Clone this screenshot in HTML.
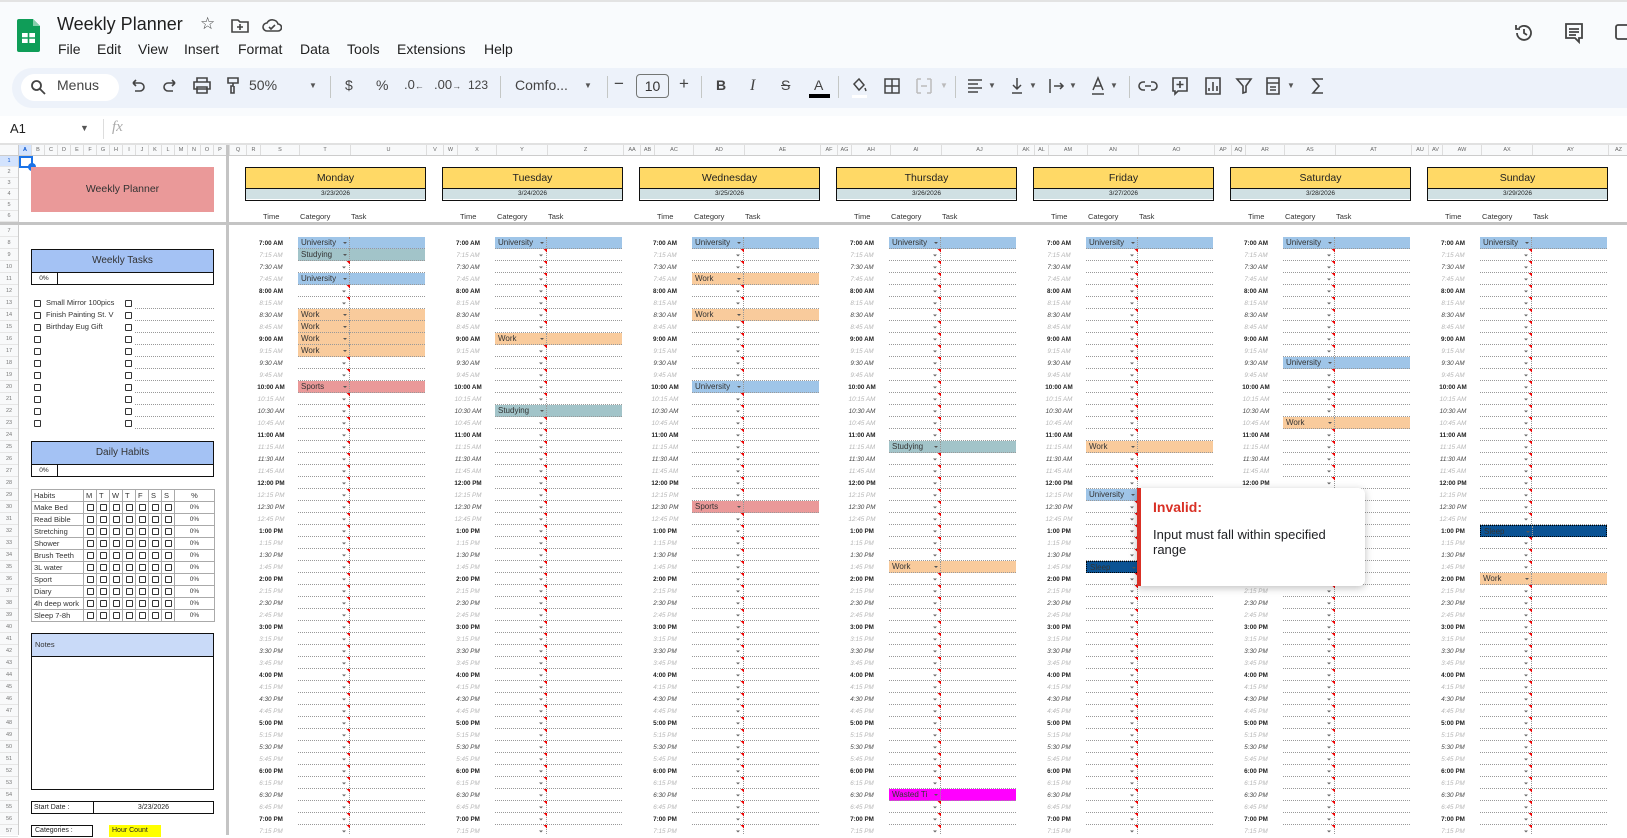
<!DOCTYPE html>
<html><head><meta charset="utf-8"><style>
*{box-sizing:border-box}
body{margin:0;width:1627px;height:835px;overflow:hidden;position:relative;font-family:"Liberation Sans",sans-serif;background:#fff;color:#222}
.a{position:absolute}
.top{left:0;top:0;width:1627px;height:116px;background:#f9fbfd;border-top:2px solid #e3e3e3}
.menu span{position:absolute;top:41px;font-size:14px;color:#1f1f1f}
.tb{left:12px;top:68px;width:1640px;height:40px;background:#edf2fa;border-radius:20px}
.ti{position:absolute;top:77px;font-size:14px;color:#444}
.sep{position:absolute;top:76px;width:1px;height:22px;background:#c4c7c5}
.ic{position:absolute;top:76px}
.dd{position:absolute;top:81px;font-size:8px;color:#555}
.ch{left:19px;top:145px;height:11px;display:flex;font-size:5.5px;color:#666;background:#f8f9fa;border-bottom:1px solid #ccc}
.ch div{border-right:1px solid #ddd;text-align:center;line-height:11px;flex:none;overflow:hidden}
.rn{left:0;width:19px;font-size:5.5px;color:#777;text-align:center;background:#f8f9fa}
.rn div{border-bottom:1px solid #e6e6e6;height:12px}
.tc{position:absolute;top:237px;width:40px;text-align:center;font-size:6.3px}
.tc b,.tc i,.tc em{display:block;height:12px;line-height:13px}
.tc b{font-weight:bold;color:#222}
.tc em{font-style:italic;color:#444}
.tc i{font-style:italic;color:#b5b5b5}
.dh{position:absolute;top:167px;width:181px;height:34px;border:1.5px solid #111}
.dh .n{height:21px;background:#ffd966;font-size:10.5px;text-align:center;line-height:21px;border-bottom:1.5px solid #111}
.dh .d{height:10px;background:#d0e0e3;font-size:6.5px;text-align:center;line-height:10px}
.hd{position:absolute;top:211px;font-size:7.5px;color:#333;line-height:12px}
.ev{position:absolute;width:127px;height:12px;font-size:8px;line-height:12px;padding-left:3px;color:#333;border-bottom:1px dotted #999}
.ev:after{content:"";position:absolute;left:45px;top:5px;border:2px solid transparent;border-top:2px solid #555}
.ev:before{content:"";position:absolute;left:51px;top:0;height:12px;border-left:1px dotted #999}
.U{background:#9fc5e8}.S{background:#a2c4c9}.W{background:#f9cb9c}.P{background:#ea9999}.L{background:#0b5394;border:1px dotted #000}.M{background:#ff00ff}
.box{position:absolute;left:31px;width:183px;border:1.5px solid #111}
.cl{position:absolute;left:31px;width:183px;height:12px;font-size:7.5px;line-height:12px;color:#333}
.cb{position:absolute;top:3px;width:7px;height:7px;border:1.2px solid #333;border-radius:1px}
.cl .dl{position:absolute;left:104px;right:0;bottom:0;border-bottom:1px dotted #999}
table.h{position:absolute;left:31px;top:489px;width:183px;border-collapse:collapse;table-layout:fixed;font-size:7.5px;color:#333}
table.h td{border:1px solid #aaa;height:12px;padding:0 0 0 2px;line-height:10px;white-space:nowrap;overflow:hidden}
table.h td.c{padding:0;text-align:center}
table.h td.c span{display:inline-block;width:7px;height:7px;border:1.2px solid #333;border-radius:1px;vertical-align:middle}
</style></head><body>
<div class="a top"></div>
<svg class="a" style="left:17px;top:19px" width="23" height="33" viewBox="0 0 23 33"><path d="M2 0h14l7 7v24a2 2 0 0 1-2 2H2a2 2 0 0 1-2-2V2a2 2 0 0 1 2-2z" fill="#0f9d58"/><path d="M16 0v7h7z" fill="#87ceac"/><rect x="5" y="14" width="13" height="10" fill="#fff"/><path d="M5 19h13M11.5 14v10" stroke="#0f9d58" stroke-width="1.6"/></svg>
<div class="a" style="left:57px;top:14px;font-size:18px;color:#1f1f1f">Weekly Planner</div>
<div class="a" style="left:200px;top:14px;font-size:17px;color:#444">☆</div>
<svg class="a" style="left:231px;top:18px" width="18" height="16" viewBox="0 0 18 16" fill="none" stroke="#444" stroke-width="1.6"><path d="M1 2h6l2 2h8v10H1z"/><path d="M9 6v6M6 9h6"/></svg>
<svg class="a" style="left:262px;top:18px" width="20" height="15" viewBox="0 0 20 15" fill="none" stroke="#444" stroke-width="1.6"><path d="M5 13a4 4 0 0 1 0-8 6 6 0 0 1 11 1 3.5 3.5 0 0 1 0 7z"/><path d="M7 9l2 2 4-4"/></svg>
<div class="a menu"><span style="left:58px">File</span><span style="left:97px">Edit</span><span style="left:138px">View</span><span style="left:184px">Insert</span><span style="left:238px">Format</span><span style="left:300px">Data</span><span style="left:347px">Tools</span><span style="left:397px">Extensions</span><span style="left:484px">Help</span></div>
<svg class="a" style="left:1513px;top:22px" width="22" height="22" viewBox="0 0 22 22" fill="none" stroke="#444" stroke-width="1.8"><path d="M4 11a7 7 0 1 0 2-5"/><path d="M3 3v4h4M11 7v4l3 2"/></svg>
<svg class="a" style="left:1564px;top:22px" width="20" height="22" viewBox="0 0 20 22" fill="none" stroke="#444" stroke-width="1.8"><path d="M2 2h16v14h-3v4l-4-4H2z"/><path d="M5 7h10M5 10h10M5 13h7"/></svg>
<svg class="a" style="left:1614px;top:22px" width="13" height="22" viewBox="0 0 13 22" fill="none" stroke="#444" stroke-width="1.8"><rect x="2" y="3" width="16" height="14" rx="2"/></svg>
<div class="a tb"></div>
<div class="a" style="left:21px;top:74px;width:98px;height:27px;background:#fff;border-radius:14px"></div>
<svg class="a" style="left:30px;top:79px" width="16" height="16" viewBox="0 0 16 16" fill="none" stroke="#444" stroke-width="1.8"><circle cx="6.5" cy="6.5" r="4.5"/><path d="M10 10l5 5"/></svg>
<div class="ti" style="left:57px">Menus</div>
<svg class="ic" style="left:130px" width="16" height="20" viewBox="0 0 16 20" fill="none" stroke="#444" stroke-width="1.6"><path d="M3 7h7a4 4 0 0 1 0 8H5M3 7l3-3M3 7l3 3"/></svg>
<svg class="ic" style="left:162px" width="16" height="20" viewBox="0 0 16 20" fill="none" stroke="#444" stroke-width="1.6"><path d="M13 7H6a4 4 0 0 0 0 8h5M13 7l-3-3M13 7l-3 3"/></svg>
<svg class="ic" style="left:193px" width="18" height="20" viewBox="0 0 18 20" fill="none" stroke="#444" stroke-width="1.6"><path d="M4 6V2h10v4M1 6h16v7H1zM4 11h10v6H4z"/></svg>
<svg class="ic" style="left:226px" width="14" height="20" viewBox="0 0 14 20" fill="none" stroke="#444" stroke-width="1.6"><path d="M2 2h10v5H2zM7 7v3H5v7h3v-7"/></svg>
<div class="ti" style="left:249px">50%</div>
<div class="dd" style="left:309px">▼</div>
<div class="sep" style="left:330px"></div>
<div class="ti" style="left:345px">$</div>
<div class="ti" style="left:376px">%</div>
<div class="ti" style="left:404px;font-size:13px">.0<span style="font-size:9px">←</span></div>
<div class="ti" style="left:434px;font-size:13px">.00<span style="font-size:9px">→</span></div>
<div class="ti" style="left:468px;font-size:12px;top:78px">123</div>
<div class="sep" style="left:500px"></div>
<div class="ti" style="left:515px">Comfo...</div>
<div class="dd" style="left:584px">▼</div>
<div class="sep" style="left:607px"></div>
<div class="ti" style="left:614px;font-size:17px;top:74px">−</div>
<div class="a" style="left:636px;top:74px;width:33px;height:24px;border:1px solid #747775;border-radius:4px;font-size:14px;text-align:center;line-height:22px;color:#333">10</div>
<div class="ti" style="left:679px;font-size:17px;top:74px">+</div>
<div class="sep" style="left:701px"></div>
<div class="ti" style="left:716px;font-weight:bold">B</div>
<div class="ti" style="left:750px;font-family:'Liberation Serif',serif;font-style:italic;font-size:16px">I</div>
<div class="ti" style="left:781px;text-decoration:line-through">S</div>
<div class="ti" style="left:814px">A</div><div class="a" style="left:809px;top:94px;width:21px;height:4px;background:#000"></div>
<div class="sep" style="left:838px"></div>
<svg class="ic" style="left:849px" width="22" height="24" viewBox="0 0 22 24" fill="none" stroke="#444" stroke-width="1.5"><path d="M5 8l5-5 5 6-5 5zM16 12l1 3"/><rect x="3" y="19" width="15" height="3" fill="#fff" stroke="none"/></svg>
<svg class="ic" style="left:883px" width="18" height="20" viewBox="0 0 18 20" fill="none" stroke="#444" stroke-width="1.5"><path d="M2 3h14v14H2zM9 3v14M2 10h14"/></svg>
<svg class="ic" style="left:915px" width="18" height="20" viewBox="0 0 18 20" fill="none" stroke="#bbb" stroke-width="1.5"><path d="M2 3h4M2 17h4M12 3h4M12 17h4M2 3v14M16 3v14M6 10h6"/></svg>
<div class="dd" style="left:940px;color:#bbb">▼</div>
<div class="sep" style="left:955px"></div>
<svg class="ic" style="left:966px" width="18" height="20" viewBox="0 0 18 20" fill="none" stroke="#444" stroke-width="1.5"><path d="M2 4h14M2 8h10M2 12h14M2 16h10"/></svg>
<div class="dd" style="left:988px">▼</div>
<svg class="ic" style="left:1008px" width="18" height="20" viewBox="0 0 18 20" fill="none" stroke="#444" stroke-width="1.5"><path d="M9 2v11M5 9l4 4 4-4M4 17h10"/></svg>
<div class="dd" style="left:1029px">▼</div>
<svg class="ic" style="left:1047px" width="18" height="20" viewBox="0 0 18 20" fill="none" stroke="#444" stroke-width="1.5"><path d="M3 3v14M7 10h9M13 7l3 3-3 3"/></svg>
<div class="dd" style="left:1069px">▼</div>
<svg class="ic" style="left:1089px" width="18" height="20" viewBox="0 0 18 20" fill="none" stroke="#444" stroke-width="1.5"><path d="M4 14l5-12 5 12M5.5 10h7M3 18h12"/></svg>
<div class="dd" style="left:1110px">▼</div>
<div class="sep" style="left:1129px"></div>
<svg class="ic" style="left:1138px" width="20" height="20" viewBox="0 0 20 20" fill="none" stroke="#444" stroke-width="1.6"><path d="M7 6H5a4 4 0 0 0 0 8h2M13 6h2a4 4 0 0 1 0 8h-2M7 10h6"/></svg>
<svg class="ic" style="left:1171px" width="18" height="20" viewBox="0 0 18 20" fill="none" stroke="#444" stroke-width="1.6"><path d="M2 2h14v13H7l-3 3v-3H2zM9 5v7M5.5 8.5h7"/></svg>
<svg class="ic" style="left:1204px" width="18" height="20" viewBox="0 0 18 20" fill="none" stroke="#444" stroke-width="1.6"><path d="M2 2h14v16H2zM5 15v-3M9 15V6M13 15v-5"/></svg>
<svg class="ic" style="left:1235px" width="18" height="20" viewBox="0 0 18 20" fill="none" stroke="#444" stroke-width="1.6"><path d="M2 3h14l-5 7v6l-3 1v-7z"/></svg>
<svg class="ic" style="left:1264px" width="18" height="20" viewBox="0 0 18 20" fill="none" stroke="#444" stroke-width="1.6"><path d="M3 2h12v16H3zM3 7h12M6 11h6M6 14h6"/></svg>
<div class="dd" style="left:1287px">▼</div>
<svg class="ic" style="left:1310px" width="16" height="20" viewBox="0 0 16 20" fill="none" stroke="#444" stroke-width="1.6"><path d="M13 3H3l6 7-6 7h10"/></svg>
<div class="a" style="left:10px;top:121px;font-size:13px;color:#1f1f1f">A1</div>
<div class="a" style="left:80px;top:123px;font-size:9px;color:#555">▼</div>
<div class="a" style="left:103px;top:119px;width:1px;height:20px;background:#ddd"></div>
<div class="a" style="left:112px;top:119px;font-size:15px;color:#aaa;font-family:'Liberation Serif',serif;font-style:italic">fx</div>
<div class="a" style="left:0;top:143px;width:1627px;height:2px;background:#e1e1e1"></div>
<div class="a" style="left:0;top:145px;width:19px;height:11px;background:#f8f9fa;border-right:1px solid #ccc;border-bottom:1px solid #ccc"></div>
<div class="a ch">
<div style="width:13px;background:#d3e3fd;color:#0b57d0;font-weight:bold">A</div><div style="width:13px">B</div><div style="width:13px">C</div><div style="width:13px">D</div><div style="width:13px">E</div><div style="width:13px">F</div><div style="width:13px">G</div><div style="width:13px">H</div><div style="width:13px">I</div><div style="width:13px">J</div><div style="width:13px">K</div><div style="width:13px">L</div><div style="width:13px">M</div><div style="width:13px">N</div><div style="width:13px">O</div><div style="width:13px">P</div>
<div style="width:3px;background:#c4c4c4"></div>
<div style="width:17px">Q</div><div style="width:14px">R</div><div style="width:39px">S</div><div style="width:51px">T</div><div style="width:76px">U</div>
<div style="width:17px">V</div><div style="width:14px">W</div><div style="width:39px">X</div><div style="width:51px">Y</div><div style="width:76px">Z</div>
<div style="width:17px">AA</div><div style="width:14px">AB</div><div style="width:39px">AC</div><div style="width:51px">AD</div><div style="width:76px">AE</div>
<div style="width:17px">AF</div><div style="width:14px">AG</div><div style="width:39px">AH</div><div style="width:51px">AI</div><div style="width:76px">AJ</div>
<div style="width:17px">AK</div><div style="width:14px">AL</div><div style="width:39px">AM</div><div style="width:51px">AN</div><div style="width:76px">AO</div>
<div style="width:17px">AP</div><div style="width:14px">AQ</div><div style="width:39px">AR</div><div style="width:51px">AS</div><div style="width:76px">AT</div>
<div style="width:17px">AU</div><div style="width:14px">AV</div><div style="width:39px">AW</div><div style="width:51px">AX</div><div style="width:76px">AY</div>
<div style="width:20px">AZ</div>
</div>
<div class="a rn" style="top:156px;line-height:11px;height:66px;border-right:1px solid #ccc"><div style="background:#d3e3fd;color:#0b57d0;height:11px">1</div><div style="height:11px">2</div><div style="height:11px">3</div><div style="height:11px">4</div><div style="height:11px">5</div><div style="height:11px">6</div></div>
<div class="a" style="left:0;top:222px;width:1627px;height:3px;background:#c4c4c4"></div>
<div class="a" style="left:226px;top:145px;width:3px;height:690px;background:#c4c4c4"></div>
<div class="a rn" style="top:225px;line-height:12px;height:610px;border-right:1px solid #ccc">
<div>7</div><div>8</div><div>9</div><div>10</div><div>11</div><div>12</div><div>13</div><div>14</div><div>15</div><div>16</div><div>17</div><div>18</div><div>19</div><div>20</div><div>21</div><div>22</div><div>23</div><div>24</div><div>25</div><div>26</div><div>27</div><div>28</div><div>29</div><div>30</div><div>31</div><div>32</div><div>33</div><div>34</div><div>35</div><div>36</div><div>37</div><div>38</div><div>39</div><div>40</div><div>41</div><div>42</div><div>43</div><div>44</div><div>45</div><div>46</div><div>47</div><div>48</div><div>49</div><div>50</div><div>51</div><div>52</div><div>53</div><div>54</div><div>55</div><div>56</div><div>57</div></div>
<div class="a" style="left:19px;top:156px;width:14px;height:12px;border:2px solid #1a73e8"></div>
<div class="a" style="left:28px;top:163px;width:8px;height:8px;border-radius:50%;background:#1a73e8"></div>

<!-- left panel -->
<div class="a" style="left:31px;top:167px;width:183px;height:45px;background:#ea9999;font-size:10.5px;text-align:center;line-height:45px;color:#333">Weekly Planner</div>
<div class="box" style="top:249px;height:36px"></div>
<div class="a" style="left:31px;top:249px;width:183px;height:24px;background:#a4c2f4;border:1.5px solid #111;font-size:10px;text-align:center;line-height:22px;color:#333">Weekly Tasks</div>
<div class="a" style="left:31px;top:273px;width:27px;height:12px;border-right:1.5px solid #111;font-size:6.5px;text-align:center;line-height:12px">0%</div>
<div class="cl" style="top:297px"><span class="cb" style="left:3px"></span><span style="position:absolute;left:15px">Small Mirror 100pics</span><span class="cb" style="left:94px"></span><span class="dl"></span></div>
<div class="cl" style="top:309px"><span class="cb" style="left:3px"></span><span style="position:absolute;left:15px">Finish Painting St. V</span><span class="cb" style="left:94px"></span><span class="dl"></span></div>
<div class="cl" style="top:321px"><span class="cb" style="left:3px"></span><span style="position:absolute;left:15px">Birthday Eug Gift</span><span class="cb" style="left:94px"></span><span class="dl"></span></div>
<div class="cl" style="top:333px"><span class="cb" style="left:3px"></span><span class="cb" style="left:94px"></span><span class="dl"></span></div>
<div class="cl" style="top:345px"><span class="cb" style="left:3px"></span><span class="cb" style="left:94px"></span><span class="dl"></span></div>
<div class="cl" style="top:357px"><span class="cb" style="left:3px"></span><span class="cb" style="left:94px"></span><span class="dl"></span></div>
<div class="cl" style="top:369px"><span class="cb" style="left:3px"></span><span class="cb" style="left:94px"></span><span class="dl"></span></div>
<div class="cl" style="top:381px"><span class="cb" style="left:3px"></span><span class="cb" style="left:94px"></span><span class="dl"></span></div>
<div class="cl" style="top:393px"><span class="cb" style="left:3px"></span><span class="cb" style="left:94px"></span><span class="dl"></span></div>
<div class="cl" style="top:405px"><span class="cb" style="left:3px"></span><span class="cb" style="left:94px"></span><span class="dl"></span></div>
<div class="cl" style="top:417px"><span class="cb" style="left:3px"></span><span class="cb" style="left:94px"></span><span class="dl"></span></div>
<div class="box" style="top:441px;height:36px"></div>
<div class="a" style="left:31px;top:441px;width:183px;height:24px;background:#a4c2f4;border:1.5px solid #111;font-size:10px;text-align:center;line-height:22px;color:#333">Daily Habits</div>
<div class="a" style="left:31px;top:465px;width:27px;height:12px;border-right:1.5px solid #111;font-size:6.5px;text-align:center;line-height:12px">0%</div>
<table class="h">
<colgroup><col style="width:52px"><col style="width:13px"><col style="width:13px"><col style="width:13px"><col style="width:13px"><col style="width:13px"><col style="width:13px"><col style="width:13px"><col style="width:40px"></colgroup>
<tr><td>Habits</td><td>M</td><td>T</td><td>W</td><td>T</td><td>F</td><td>S</td><td>S</td><td class="c">%</td></tr>
<tr><td>Make Bed</td><td class="c"><span></span></td><td class="c"><span></span></td><td class="c"><span></span></td><td class="c"><span></span></td><td class="c"><span></span></td><td class="c"><span></span></td><td class="c"><span></span></td><td class="c" style="font-size:6.5px">0%</td></tr>
<tr><td>Read Bible</td><td class="c"><span></span></td><td class="c"><span></span></td><td class="c"><span></span></td><td class="c"><span></span></td><td class="c"><span></span></td><td class="c"><span></span></td><td class="c"><span></span></td><td class="c" style="font-size:6.5px">0%</td></tr>
<tr><td>Stretching</td><td class="c"><span></span></td><td class="c"><span></span></td><td class="c"><span></span></td><td class="c"><span></span></td><td class="c"><span></span></td><td class="c"><span></span></td><td class="c"><span></span></td><td class="c" style="font-size:6.5px">0%</td></tr>
<tr><td>Shower</td><td class="c"><span></span></td><td class="c"><span></span></td><td class="c"><span></span></td><td class="c"><span></span></td><td class="c"><span></span></td><td class="c"><span></span></td><td class="c"><span></span></td><td class="c" style="font-size:6.5px">0%</td></tr>
<tr><td>Brush Teeth</td><td class="c"><span></span></td><td class="c"><span></span></td><td class="c"><span></span></td><td class="c"><span></span></td><td class="c"><span></span></td><td class="c"><span></span></td><td class="c"><span></span></td><td class="c" style="font-size:6.5px">0%</td></tr>
<tr><td>3L water</td><td class="c"><span></span></td><td class="c"><span></span></td><td class="c"><span></span></td><td class="c"><span></span></td><td class="c"><span></span></td><td class="c"><span></span></td><td class="c"><span></span></td><td class="c" style="font-size:6.5px">0%</td></tr>
<tr><td>Sport</td><td class="c"><span></span></td><td class="c"><span></span></td><td class="c"><span></span></td><td class="c"><span></span></td><td class="c"><span></span></td><td class="c"><span></span></td><td class="c"><span></span></td><td class="c" style="font-size:6.5px">0%</td></tr>
<tr><td>Diary</td><td class="c"><span></span></td><td class="c"><span></span></td><td class="c"><span></span></td><td class="c"><span></span></td><td class="c"><span></span></td><td class="c"><span></span></td><td class="c"><span></span></td><td class="c" style="font-size:6.5px">0%</td></tr>
<tr><td>4h deep work</td><td class="c"><span></span></td><td class="c"><span></span></td><td class="c"><span></span></td><td class="c"><span></span></td><td class="c"><span></span></td><td class="c"><span></span></td><td class="c"><span></span></td><td class="c" style="font-size:6.5px">0%</td></tr>
<tr><td>Sleep 7-8h</td><td class="c"><span></span></td><td class="c"><span></span></td><td class="c"><span></span></td><td class="c"><span></span></td><td class="c"><span></span></td><td class="c"><span></span></td><td class="c"><span></span></td><td class="c" style="font-size:6.5px">0%</td></tr>
</table>
<div class="box" style="top:633px;height:157px"></div>
<div class="a" style="left:31px;top:633px;width:183px;height:24px;background:#c9daf8;border:1.5px solid #111;font-size:7.5px;line-height:22px;padding-left:3px;color:#333">Notes</div>
<div class="box" style="top:801px;height:13px"></div>
<div class="a" style="left:34px;top:801px;font-size:7px;line-height:13px">Start Date :</div>
<div class="a" style="left:93px;top:801px;width:1px;height:13px;background:#111"></div>
<div class="a" style="left:93px;top:801px;width:121px;font-size:7px;line-height:13px;text-align:center">3/23/2026</div>
<div class="a" style="left:31px;top:825px;width:62px;height:12px;border:1.5px solid #111;font-size:7px;line-height:10px;padding-left:3px">Categories :</div>
<div class="a" style="left:109px;top:825px;width:52px;height:12px;background:#ffff00;font-size:7px;line-height:11px;padding-left:3px">Hour Count</div>

<!-- day headers -->
<div class="dh" style="left:245px"><div class="n">Monday</div><div class="d">3/23/2026</div></div>
<div class="dh" style="left:442px"><div class="n">Tuesday</div><div class="d">3/24/2026</div></div>
<div class="dh" style="left:639px"><div class="n">Wednesday</div><div class="d">3/25/2026</div></div>
<div class="dh" style="left:836px"><div class="n">Thursday</div><div class="d">3/26/2026</div></div>
<div class="dh" style="left:1033px"><div class="n">Friday</div><div class="d">3/27/2026</div></div>
<div class="dh" style="left:1230px"><div class="n">Saturday</div><div class="d">3/28/2026</div></div>
<div class="dh" style="left:1427px"><div class="n">Sunday</div><div class="d">3/29/2026</div></div>
<div class="hd" style="left:263px">Time</div><div class="hd" style="left:300px">Category</div><div class="hd" style="left:351px">Task</div>
<div class="hd" style="left:460px">Time</div><div class="hd" style="left:497px">Category</div><div class="hd" style="left:548px">Task</div>
<div class="hd" style="left:657px">Time</div><div class="hd" style="left:694px">Category</div><div class="hd" style="left:745px">Task</div>
<div class="hd" style="left:854px">Time</div><div class="hd" style="left:891px">Category</div><div class="hd" style="left:942px">Task</div>
<div class="hd" style="left:1051px">Time</div><div class="hd" style="left:1088px">Category</div><div class="hd" style="left:1139px">Task</div>
<div class="hd" style="left:1248px">Time</div><div class="hd" style="left:1285px">Category</div><div class="hd" style="left:1336px">Task</div>
<div class="hd" style="left:1445px">Time</div><div class="hd" style="left:1482px">Category</div><div class="hd" style="left:1533px">Task</div>

<svg class="a" style="left:0;top:0" width="1627" height="835">
<defs><pattern id="p" width="127" height="12" patternUnits="userSpaceOnUse">
<line x1="0" y1="11.5" x2="127" y2="11.5" stroke="#999" stroke-width="1" stroke-dasharray="1 1"/>
<line x1="51.5" y1="0" x2="51.5" y2="12" stroke="#999" stroke-width="1" stroke-dasharray="1 1"/>
<path d="M44 5.5h4l-2 2z" fill="#666"/>
<path d="M48.5 0h3.5v3.5z" fill="#e00"/>
</pattern></defs>
<g transform="translate(298,237)"><rect width="127" height="600" fill="url(#p)"/></g>
<g transform="translate(495,237)"><rect width="127" height="600" fill="url(#p)"/></g>
<g transform="translate(692,237)"><rect width="127" height="600" fill="url(#p)"/></g>
<g transform="translate(889,237)"><rect width="127" height="600" fill="url(#p)"/></g>
<g transform="translate(1086,237)"><rect width="127" height="600" fill="url(#p)"/></g>
<g transform="translate(1283,237)"><rect width="127" height="600" fill="url(#p)"/></g>
<g transform="translate(1480,237)"><rect width="127" height="600" fill="url(#p)"/></g>
</svg>

<!-- time columns -->
<div class="tc" style="left:251px"><b>7:00 AM</b><i>7:15 AM</i><em>7:30 AM</em><i>7:45 AM</i><b>8:00 AM</b><i>8:15 AM</i><em>8:30 AM</em><i>8:45 AM</i><b>9:00 AM</b><i>9:15 AM</i><em>9:30 AM</em><i>9:45 AM</i><b>10:00 AM</b><i>10:15 AM</i><em>10:30 AM</em><i>10:45 AM</i><b>11:00 AM</b><i>11:15 AM</i><em>11:30 AM</em><i>11:45 AM</i><b>12:00 PM</b><i>12:15 PM</i><em>12:30 PM</em><i>12:45 PM</i><b>1:00 PM</b><i>1:15 PM</i><em>1:30 PM</em><i>1:45 PM</i><b>2:00 PM</b><i>2:15 PM</i><em>2:30 PM</em><i>2:45 PM</i><b>3:00 PM</b><i>3:15 PM</i><em>3:30 PM</em><i>3:45 PM</i><b>4:00 PM</b><i>4:15 PM</i><em>4:30 PM</em><i>4:45 PM</i><b>5:00 PM</b><i>5:15 PM</i><em>5:30 PM</em><i>5:45 PM</i><b>6:00 PM</b><i>6:15 PM</i><em>6:30 PM</em><i>6:45 PM</i><b>7:00 PM</b><i>7:15 PM</i></div>
<div class="tc" style="left:448px"><b>7:00 AM</b><i>7:15 AM</i><em>7:30 AM</em><i>7:45 AM</i><b>8:00 AM</b><i>8:15 AM</i><em>8:30 AM</em><i>8:45 AM</i><b>9:00 AM</b><i>9:15 AM</i><em>9:30 AM</em><i>9:45 AM</i><b>10:00 AM</b><i>10:15 AM</i><em>10:30 AM</em><i>10:45 AM</i><b>11:00 AM</b><i>11:15 AM</i><em>11:30 AM</em><i>11:45 AM</i><b>12:00 PM</b><i>12:15 PM</i><em>12:30 PM</em><i>12:45 PM</i><b>1:00 PM</b><i>1:15 PM</i><em>1:30 PM</em><i>1:45 PM</i><b>2:00 PM</b><i>2:15 PM</i><em>2:30 PM</em><i>2:45 PM</i><b>3:00 PM</b><i>3:15 PM</i><em>3:30 PM</em><i>3:45 PM</i><b>4:00 PM</b><i>4:15 PM</i><em>4:30 PM</em><i>4:45 PM</i><b>5:00 PM</b><i>5:15 PM</i><em>5:30 PM</em><i>5:45 PM</i><b>6:00 PM</b><i>6:15 PM</i><em>6:30 PM</em><i>6:45 PM</i><b>7:00 PM</b><i>7:15 PM</i></div>
<div class="tc" style="left:645px"><b>7:00 AM</b><i>7:15 AM</i><em>7:30 AM</em><i>7:45 AM</i><b>8:00 AM</b><i>8:15 AM</i><em>8:30 AM</em><i>8:45 AM</i><b>9:00 AM</b><i>9:15 AM</i><em>9:30 AM</em><i>9:45 AM</i><b>10:00 AM</b><i>10:15 AM</i><em>10:30 AM</em><i>10:45 AM</i><b>11:00 AM</b><i>11:15 AM</i><em>11:30 AM</em><i>11:45 AM</i><b>12:00 PM</b><i>12:15 PM</i><em>12:30 PM</em><i>12:45 PM</i><b>1:00 PM</b><i>1:15 PM</i><em>1:30 PM</em><i>1:45 PM</i><b>2:00 PM</b><i>2:15 PM</i><em>2:30 PM</em><i>2:45 PM</i><b>3:00 PM</b><i>3:15 PM</i><em>3:30 PM</em><i>3:45 PM</i><b>4:00 PM</b><i>4:15 PM</i><em>4:30 PM</em><i>4:45 PM</i><b>5:00 PM</b><i>5:15 PM</i><em>5:30 PM</em><i>5:45 PM</i><b>6:00 PM</b><i>6:15 PM</i><em>6:30 PM</em><i>6:45 PM</i><b>7:00 PM</b><i>7:15 PM</i></div>
<div class="tc" style="left:842px"><b>7:00 AM</b><i>7:15 AM</i><em>7:30 AM</em><i>7:45 AM</i><b>8:00 AM</b><i>8:15 AM</i><em>8:30 AM</em><i>8:45 AM</i><b>9:00 AM</b><i>9:15 AM</i><em>9:30 AM</em><i>9:45 AM</i><b>10:00 AM</b><i>10:15 AM</i><em>10:30 AM</em><i>10:45 AM</i><b>11:00 AM</b><i>11:15 AM</i><em>11:30 AM</em><i>11:45 AM</i><b>12:00 PM</b><i>12:15 PM</i><em>12:30 PM</em><i>12:45 PM</i><b>1:00 PM</b><i>1:15 PM</i><em>1:30 PM</em><i>1:45 PM</i><b>2:00 PM</b><i>2:15 PM</i><em>2:30 PM</em><i>2:45 PM</i><b>3:00 PM</b><i>3:15 PM</i><em>3:30 PM</em><i>3:45 PM</i><b>4:00 PM</b><i>4:15 PM</i><em>4:30 PM</em><i>4:45 PM</i><b>5:00 PM</b><i>5:15 PM</i><em>5:30 PM</em><i>5:45 PM</i><b>6:00 PM</b><i>6:15 PM</i><em>6:30 PM</em><i>6:45 PM</i><b>7:00 PM</b><i>7:15 PM</i></div>
<div class="tc" style="left:1039px"><b>7:00 AM</b><i>7:15 AM</i><em>7:30 AM</em><i>7:45 AM</i><b>8:00 AM</b><i>8:15 AM</i><em>8:30 AM</em><i>8:45 AM</i><b>9:00 AM</b><i>9:15 AM</i><em>9:30 AM</em><i>9:45 AM</i><b>10:00 AM</b><i>10:15 AM</i><em>10:30 AM</em><i>10:45 AM</i><b>11:00 AM</b><i>11:15 AM</i><em>11:30 AM</em><i>11:45 AM</i><b>12:00 PM</b><i>12:15 PM</i><em>12:30 PM</em><i>12:45 PM</i><b>1:00 PM</b><i>1:15 PM</i><em>1:30 PM</em><i>1:45 PM</i><b>2:00 PM</b><i>2:15 PM</i><em>2:30 PM</em><i>2:45 PM</i><b>3:00 PM</b><i>3:15 PM</i><em>3:30 PM</em><i>3:45 PM</i><b>4:00 PM</b><i>4:15 PM</i><em>4:30 PM</em><i>4:45 PM</i><b>5:00 PM</b><i>5:15 PM</i><em>5:30 PM</em><i>5:45 PM</i><b>6:00 PM</b><i>6:15 PM</i><em>6:30 PM</em><i>6:45 PM</i><b>7:00 PM</b><i>7:15 PM</i></div>
<div class="tc" style="left:1236px"><b>7:00 AM</b><i>7:15 AM</i><em>7:30 AM</em><i>7:45 AM</i><b>8:00 AM</b><i>8:15 AM</i><em>8:30 AM</em><i>8:45 AM</i><b>9:00 AM</b><i>9:15 AM</i><em>9:30 AM</em><i>9:45 AM</i><b>10:00 AM</b><i>10:15 AM</i><em>10:30 AM</em><i>10:45 AM</i><b>11:00 AM</b><i>11:15 AM</i><em>11:30 AM</em><i>11:45 AM</i><b>12:00 PM</b><i>12:15 PM</i><em>12:30 PM</em><i>12:45 PM</i><b>1:00 PM</b><i>1:15 PM</i><em>1:30 PM</em><i>1:45 PM</i><b>2:00 PM</b><i>2:15 PM</i><em>2:30 PM</em><i>2:45 PM</i><b>3:00 PM</b><i>3:15 PM</i><em>3:30 PM</em><i>3:45 PM</i><b>4:00 PM</b><i>4:15 PM</i><em>4:30 PM</em><i>4:45 PM</i><b>5:00 PM</b><i>5:15 PM</i><em>5:30 PM</em><i>5:45 PM</i><b>6:00 PM</b><i>6:15 PM</i><em>6:30 PM</em><i>6:45 PM</i><b>7:00 PM</b><i>7:15 PM</i></div>
<div class="tc" style="left:1433px"><b>7:00 AM</b><i>7:15 AM</i><em>7:30 AM</em><i>7:45 AM</i><b>8:00 AM</b><i>8:15 AM</i><em>8:30 AM</em><i>8:45 AM</i><b>9:00 AM</b><i>9:15 AM</i><em>9:30 AM</em><i>9:45 AM</i><b>10:00 AM</b><i>10:15 AM</i><em>10:30 AM</em><i>10:45 AM</i><b>11:00 AM</b><i>11:15 AM</i><em>11:30 AM</em><i>11:45 AM</i><b>12:00 PM</b><i>12:15 PM</i><em>12:30 PM</em><i>12:45 PM</i><b>1:00 PM</b><i>1:15 PM</i><em>1:30 PM</em><i>1:45 PM</i><b>2:00 PM</b><i>2:15 PM</i><em>2:30 PM</em><i>2:45 PM</i><b>3:00 PM</b><i>3:15 PM</i><em>3:30 PM</em><i>3:45 PM</i><b>4:00 PM</b><i>4:15 PM</i><em>4:30 PM</em><i>4:45 PM</i><b>5:00 PM</b><i>5:15 PM</i><em>5:30 PM</em><i>5:45 PM</i><b>6:00 PM</b><i>6:15 PM</i><em>6:30 PM</em><i>6:45 PM</i><b>7:00 PM</b><i>7:15 PM</i></div>

<!-- events -->
<div class="ev U" style="left:298px;top:237px">University</div>
<div class="ev S" style="left:298px;top:249px">Studying</div>
<div class="ev U" style="left:298px;top:273px">University</div>
<div class="ev W" style="left:298px;top:309px">Work</div>
<div class="ev W" style="left:298px;top:321px">Work</div>
<div class="ev W" style="left:298px;top:333px">Work</div>
<div class="ev W" style="left:298px;top:345px">Work</div>
<div class="ev P" style="left:298px;top:381px">Sports</div>
<div class="ev U" style="left:495px;top:237px">University</div>
<div class="ev W" style="left:495px;top:333px">Work</div>
<div class="ev S" style="left:495px;top:405px">Studying</div>
<div class="ev U" style="left:692px;top:237px">University</div>
<div class="ev W" style="left:692px;top:273px">Work</div>
<div class="ev W" style="left:692px;top:309px">Work</div>
<div class="ev U" style="left:692px;top:381px">University</div>
<div class="ev P" style="left:692px;top:501px">Sports</div>
<div class="ev U" style="left:889px;top:237px">University</div>
<div class="ev S" style="left:889px;top:441px">Studying</div>
<div class="ev W" style="left:889px;top:561px">Work</div>
<div class="ev M" style="left:889px;top:789px">Wasted Ti</div>
<div class="ev U" style="left:1086px;top:237px">University</div>
<div class="ev W" style="left:1086px;top:441px">Work</div>
<div class="ev U" style="left:1086px;top:489px">University</div>
<div class="ev L" style="left:1086px;top:561px">Sleep</div>
<div class="ev U" style="left:1283px;top:237px">University</div>
<div class="ev U" style="left:1283px;top:357px">University</div>
<div class="ev W" style="left:1283px;top:417px">Work</div>
<div class="ev U" style="left:1480px;top:237px">University</div>
<div class="ev L" style="left:1480px;top:525px">Sleep</div>
<div class="ev W" style="left:1480px;top:573px">Work</div>

<!-- popup -->
<div class="a" style="left:1137px;top:488px;width:228px;height:98px;background:#fff;border-left:4px solid #d93025;border-radius:0 6px 6px 0;box-shadow:0 2px 8px rgba(0,0,0,.25)">
<div style="position:absolute;left:12px;top:11px;font-size:14px;font-weight:bold;color:#d93025">Invalid:</div>
<div style="position:absolute;left:12px;top:39px;width:200px;font-size:13px;line-height:15px;color:#202124">Input must fall within specified range</div>
</div>
</body></html>
